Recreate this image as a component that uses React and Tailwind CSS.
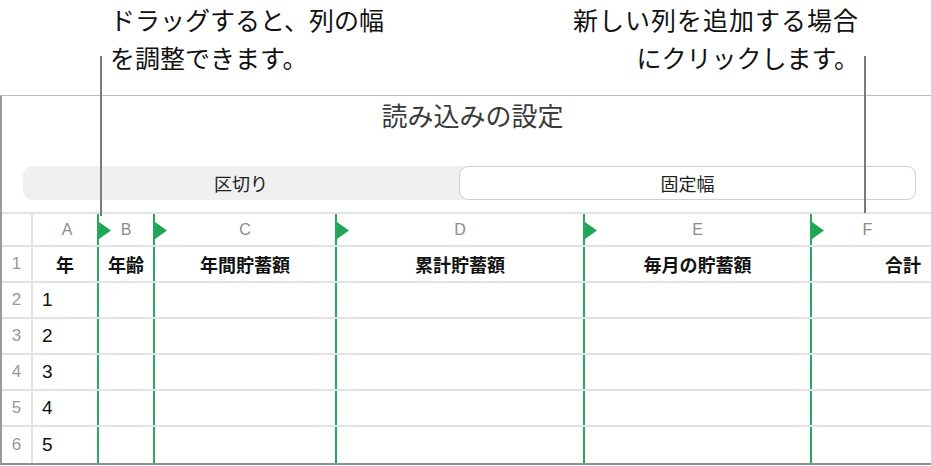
const FONT = { fontFamily: '"Noto Sans CJK JP", "Noto Sans", sans-serif' }
const LATIN = { fontFamily: '"Liberation Sans", "Noto Sans CJK JP", sans-serif' }

const COLS = [
  { key: 'A', w: 'w-[64px]', head: '年', align: 'center' },
  { key: 'B', w: 'w-[56px]', head: '年齢', align: 'center' },
  { key: 'C', w: 'w-[182px]', head: '年間貯蓄額', align: 'center' },
  { key: 'D', w: 'w-[248px]', head: '累計貯蓄額', align: 'center' },
  { key: 'E', w: 'w-[227px]', head: '毎月の貯蓄額', align: 'center' },
  { key: 'F', w: 'flex-1', head: '合計', align: 'right' },
]

const ROWS = [1, 2, 3, 4, 5]

function Marker() {
  return (
    <svg className="absolute left-0 top-[8px]" width="12" height="17" viewBox="0 0 12 17">
      <path d="M0 0 L12 8.5 L0 17 Z" fill="#1fa556" />
    </svg>
  )
}

function cellBase(i) {
  // 列 B 以降は緑の区切り線
  return i === 0 ? '' : 'border-l-2 border-[#27a95c]'
}

export default function App() {
  return (
    <div className="relative w-[931px] h-[466px] bg-white overflow-hidden text-[#111]" style={FONT}>
      {/* 吹き出し */}
      <div className="h-[95px] flex justify-between pl-[110px] pr-[72px] text-[25px] leading-[38px]">
        <div>
          <div>ドラッグすると、列の幅</div>
          <div>を調整できます。</div>
        </div>
        <div className="text-right">
          <div className="tracking-[1px]">新しい列を追加する場合</div>
          <div>にクリックします。</div>
        </div>
      </div>

      {/* パネル */}
      <div className="border-t border-l-2 border-b-2 border-t-[#bdbdbd] border-l-[#9a9a9a] border-b-[#8f8f8f]">
        <div className="pl-[12px] text-center text-[26px] leading-[38px] text-[#3a3a3a]">読み込みの設定</div>

        <div className="mt-[32px] ml-[21px] w-[893px] h-[34px] flex rounded-[9px] bg-[#f0f0f0] text-[18px] text-[#222]">
          <div className="flex-1 flex items-center justify-center">区切り</div>
          <div className="w-[457px] flex items-center justify-center bg-white border border-[#cfcfcf] rounded-[9px]">固定幅</div>
        </div>

        <div className="mt-[12px] border-t-2 border-[#e3e3e3]">
          {/* 列見出し */}
          <div className="flex h-[33px] border-b-2 border-[#e3e3e3] text-[16px] text-[#8c8c8c]" style={LATIN}>
            <div className="w-[31px] border-r-2 border-[#e3e3e3]" />
            {COLS.map((c, i) => (
              <div key={c.key} className={`relative ${c.w} ${cellBase(i)} flex items-center justify-center`}>
                {i > 0 && <Marker />}
                <span className={c.key === 'F' ? 'pr-[8px]' : i === 0 ? 'pl-[4px]' : ''}>{c.key}</span>
              </div>
            ))}
          </div>

          {/* 1 行目 */}
          <div className="flex h-[36px] border-b-2 border-[#e3e3e3]">
            <div className="w-[31px] border-r-2 border-[#e3e3e3] flex items-center justify-center text-[17px] text-[#999]" style={LATIN}>1</div>
            {COLS.map((c, i) => (
              <div
                key={c.key}
                className={`${c.w} ${cellBase(i)} flex items-center font-bold text-[18px] ${c.align === 'right' ? 'justify-end pr-[10px]' : 'justify-center'}`}
              >
                {c.head}
              </div>
            ))}
          </div>

          {ROWS.map((n, r) => (
            <div key={n} className={`flex h-[36px] ${r < ROWS.length - 1 ? 'border-b-2 border-[#e3e3e3]' : ''}`}>
              <div className="w-[31px] border-r-2 border-[#e3e3e3] flex items-center justify-center text-[17px] text-[#999]" style={LATIN}>{n + 1}</div>
              {COLS.map((c, i) => (
                <div
                  key={c.key}
                  className={`${c.w} ${cellBase(i)} flex items-center text-[19px] ${i === 0 ? 'pl-[9px]' : ''}`}
                  style={LATIN}
                >
                  {i === 0 ? n : ''}
                </div>
              ))}
            </div>
          ))}
        </div>
      </div>

      {/* 引き出し線 */}
      <div className="absolute left-[100px] top-[56px] w-[2px] h-[160px] bg-[#7a7a7a]" />
      <div className="absolute left-[864px] top-[56px] w-[2px] h-[157px] bg-[#7a7a7a]" />
    </div>
  )
}
